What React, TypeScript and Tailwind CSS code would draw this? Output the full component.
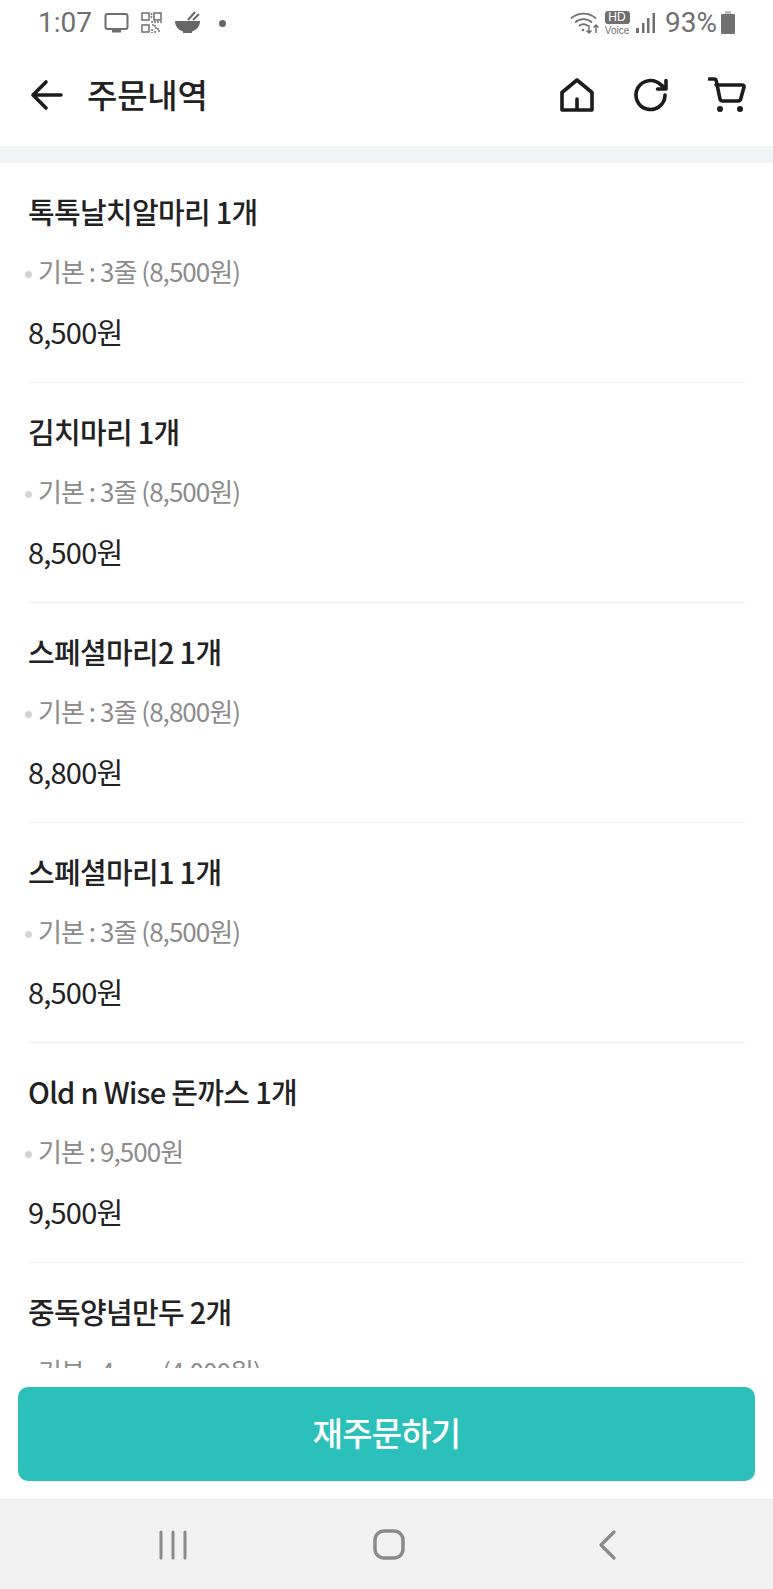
import React from 'react';

const FONT = "font-['Noto_Sans_CJK_KR','Noto_Sans',sans-serif]";

const items = [
  { name: '톡톡날치알마리 1개', option: '기본 : 3줄 (8,500원)', price: '8,500원' },
  { name: '김치마리 1개', option: '기본 : 3줄 (8,500원)', price: '8,500원' },
  { name: '스페셜마리2 1개', option: '기본 : 3줄 (8,800원)', price: '8,800원' },
  { name: '스페셜마리1 1개', option: '기본 : 3줄 (8,500원)', price: '8,500원' },
  { name: 'Old n Wise 돈까스 1개', option: '기본 : 9,500원', price: '9,500원' },
  { name: '중독양념만두 2개', option: '기본 : 4 pcs (4,000원)', price: '8,000원' },
];

const StatusBar = () => (
  <div className="flex h-[46px] shrink-0 items-center justify-between pl-[38px] pr-[37px] text-[#6f6f6f]">
    <div className="flex items-center">
      <span className="font-['Roboto',sans-serif] text-[28px] leading-none">1:07</span>
      <svg className="ml-[12px]" width="26" height="22" viewBox="0 0 26 22" fill="none">
        <rect x="1.5" y="2" width="22" height="15" rx="2" stroke="#6f6f6f" strokeWidth="2" />
        <rect x="8" y="18" width="9" height="2.5" fill="#6f6f6f" />
      </svg>
      <svg className="ml-[11px]" width="22" height="22" viewBox="0 0 22 22" fill="none" stroke="#777" strokeWidth="1.6">
        <rect x="1" y="1" width="7" height="7" />
        <rect x="13" y="1" width="7" height="7" />
        <rect x="1" y="13" width="7" height="7" />
        <path d="M10.500 1v6M10 10h11M11 13h3v3h3v3h3M11 17v4M14 19v2" strokeDasharray="2 1" />
      </svg>
      <svg className="ml-[11px]" width="28" height="26" viewBox="0 0 28 26" fill="#666">
        <path d="M1 11h25c0 5.500-3.500 9-8 10.500v1.500h-9v-1.500C4.500 20 1 16.500 1 11z" />
        <path d="M14 10l7-8M19 10l6-6" stroke="#666" strokeWidth="2" />
      </svg>
      <span className="ml-[17px] h-[7px] w-[7px] rounded-full bg-[#666]" />
    </div>
    <div className="flex items-center">
      <svg width="30" height="24" viewBox="0 0 30 24" fill="none" stroke="#6f6f6f" strokeWidth="1.8">
        <path d="M1 7.500C8 1 19 1 26 7.500M5 11.500C10 7 17 7 22 11.500M9 15c3-2.500 6-2.500 9 0" />
        <circle cx="13" cy="19" r="1.300" fill="#6f6f6f" stroke="none" />
        <path d="M19 14v8M16.500 19.500l2.500 2.500 2.500-2.500M26 22v-8M23.500 16.500l2.500-2.500 2.500 2.500" strokeWidth="1.500" />
      </svg>
      <div className="ml-[4px] flex w-[26px] flex-col items-center">
        <span className="flex h-[13px] w-[25px] items-center justify-center rounded-[3px] bg-[#6f6f6f] font-['Liberation_Sans',sans-serif] text-[12px] leading-none text-white">HD</span>
        <span className="mt-[2px] font-['Liberation_Sans',sans-serif] text-[10px] leading-none">Voice</span>
      </div>
      <svg className="ml-[5px]" width="21" height="22" viewBox="0 0 21 22" fill="#6f6f6f">
        <rect x="1" y="16" width="3" height="5" />
        <rect x="7" y="11" width="2.500" height="10" />
        <rect x="12" y="6" width="2.500" height="15" />
        <rect x="17.500" y="1" width="2.500" height="20" />
      </svg>
      <span className="ml-[9px] font-['Roboto',sans-serif] text-[28px] leading-none">93%</span>
      <svg className="ml-[3px]" width="16" height="24" viewBox="0 0 16 24" fill="#6f6f6f">
        <rect x="5" y="0" width="6" height="3" fill="#bbb" />
        <rect x="1" y="3" width="14" height="20" rx="1" />
      </svg>
    </div>
  </div>
);

const Header = () => (
  <div className="flex h-[100px] shrink-0 items-center pb-[3px] pl-[30px] pr-[27px]">
    <svg width="34" height="34" viewBox="0 0 34 34" fill="none" stroke="#1c1c1c" strokeWidth="3.600" strokeLinecap="round" strokeLinejoin="round">
      <path d="M31 17H3M16 4L3 17l13 13" />
    </svg>
    <h1 className="ml-[23px] text-[33px] font-medium leading-none tracking-[-0.2px] text-[#222]">주문내역</h1>
    <div className="ml-auto flex items-center gap-[40px]">
      <svg width="34" height="34" viewBox="0 0 34 34" fill="none" stroke="#1c1c1c" strokeWidth="3.600" strokeLinejoin="round">
        <path d="M2 14.500L17 2l15 12.500V32H2zM17 32V21" strokeLinecap="round" />
      </svg>
      <svg width="34" height="34" viewBox="0 0 34 34" fill="none" stroke="#1c1c1c" strokeWidth="3.600" strokeLinecap="round" strokeLinejoin="round">
        <path d="M31 17a14.500 14.500 0 1 1-4.500-10.500L31 10" />
        <path d="M32 2.500V11h-8.500" />
      </svg>
      <svg width="38" height="36" viewBox="0 0 38 36" fill="none" stroke="#1c1c1c" strokeWidth="3.600" strokeLinecap="round" strokeLinejoin="round">
        <path d="M1.500 2H6c1 0 2 .5 2.300 2L12 22c.3 1.500 1 2 2.500 2H30c1.500 0 2.300-.7 2.700-2L36 10c.3-1.300-.5-2-2-2H8" />
        <circle cx="12" cy="32" r="3" fill="#1c1c1c" stroke="none" />
        <circle cx="32" cy="32" r="3" fill="#1c1c1c" stroke="none" />
      </svg>
    </div>
  </div>
);

export default function App() {
  return (
    <div className={`flex h-[1589px] w-[773px] flex-col overflow-hidden bg-white ${FONT}`}>
      <StatusBar />
      <Header />
      <div className="h-[17px] shrink-0 bg-[#f3f4f6]" />
      <div className="min-h-0 flex-1 overflow-hidden px-[28px]">
        {items.map((item, i) => (
          <div key={i} className="flex h-[220px] flex-col border-b border-[#f0f0f0] pt-[28px]">
            <div className="text-[29px] font-medium leading-[40px] tracking-[-0.7px] text-[#222]">{item.name}</div>
            <div className="relative mt-[20px] text-[26px] leading-[40px] tracking-[-0.95px] text-[#8c8c8c]">
              <span className="absolute left-[-3px] top-[20px] h-[7px] w-[7px] rounded-full bg-[#d4d4d4]" />
              <span className="ml-[10px]">{item.option}</span>
            </div>
            <div className="mt-[20px] text-[29px] leading-[40px] tracking-[-0.8px] text-[#222]">{item.price}</div>
          </div>
        ))}
      </div>
      <div className="shrink-0 bg-white px-[18px] pb-[18px] pt-[19px]">
        <button className="flex h-[94px] w-full items-center justify-center rounded-[10px] bg-[#2bc0ba] pb-[3px] text-[33px] font-medium tracking-[-0.8px] text-white">
          재주문하기
        </button>
      </div>
      <div className="flex h-[90px] shrink-0 items-start border-t border-[#e8e8e8] bg-[#f1f1f1]">
        <svg className="ml-[158px] mt-[30px]" width="30" height="30" viewBox="0 0 30 30" fill="none" stroke="#8a8a8a" strokeWidth="3" strokeLinecap="round">
          <path d="M3 2v26M15 2v26M27 2v26" />
        </svg>
        <svg className="ml-[185px] mt-[29px]" width="32" height="31" viewBox="0 0 32 31" fill="none" stroke="#8a8a8a" strokeWidth="3.500">
          <rect x="2" y="2" width="28" height="27" rx="9" />
        </svg>
        <svg className="ml-[193px] mt-[30px]" width="19" height="30" viewBox="0 0 19 30" fill="none" stroke="#8a8a8a" strokeWidth="3.200" strokeLinecap="round" strokeLinejoin="round">
          <path d="M16 2L3 15l13 13" />
        </svg>
      </div>
    </div>
  );
}
